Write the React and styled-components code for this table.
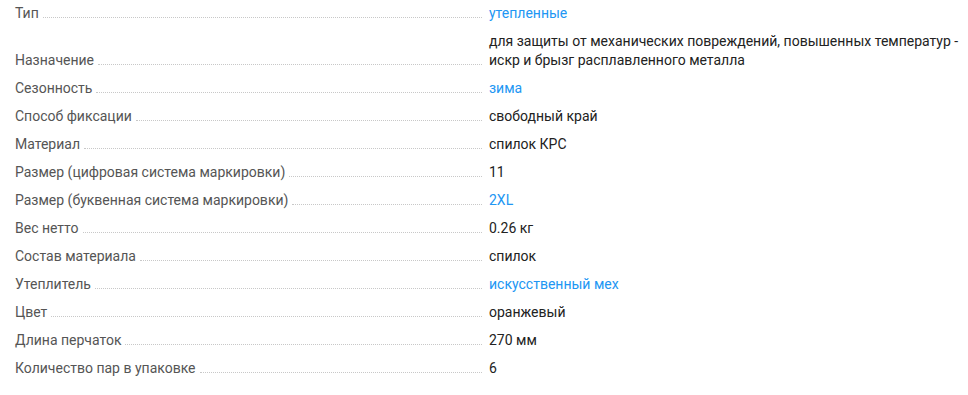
import React from 'react';
import styled, { createGlobalStyle } from 'styled-components';

const GlobalStyle = createGlobalStyle`
  body {
    margin: 0;
    background: #fff;
    font-family: Roboto, "Noto Sans", Arial, sans-serif;
  }
`;

const Table = styled.div`
  width: 960px;
  padding: 0 0 0 15px;
  box-sizing: border-box;
`;

const Row = styled.div`
  display: flex;
  align-items: flex-end;
  padding: 4px 0 5px;
  font-size: 14px;
  line-height: 19px;
`;

const Name = styled.div`
  width: 467px;
  flex-shrink: 0;
  display: flex;
  align-items: flex-end;
  color: #555;
`;

const Dots = styled.span`
  flex: 1;
  margin: 0 0 5px 4px;
  border-bottom: 1px dotted #c8c8c8;
`;

const Value = styled.div`
  flex: 1;
  padding-left: 7px;
  color: ${(p) => (p.$link ? '#2196f3' : '#222')};
`;

const specs = [
  ['Тип', 'утепленные', true],
  ['Назначение', 'для защиты от механических повреждений, повышенных температур - искр и брызг расплавленного металла'],
  ['Сезонность', 'зима', true],
  ['Способ фиксации', 'свободный край'],
  ['Материал', 'спилок КРС'],
  ['Размер (цифровая система маркировки)', '11'],
  ['Размер (буквенная система маркировки)', '2XL', true],
  ['Вес нетто', '0.26 кг'],
  ['Состав материала', 'спилок'],
  ['Утеплитель', 'искусственный мех', true],
  ['Цвет', 'оранжевый'],
  ['Длина перчаток', '270 мм'],
  ['Количество пар в упаковке', '6'],
];

const App = () => (
  <>
    <GlobalStyle />
    <Table>
      {specs.map(([name, value, link]) => (
        <Row key={name}>
          <Name>
            <span>{name}</span>
            <Dots />
          </Name>
          <Value $link={link}>{value}</Value>
        </Row>
      ))}
    </Table>
  </>
);

export default App;
